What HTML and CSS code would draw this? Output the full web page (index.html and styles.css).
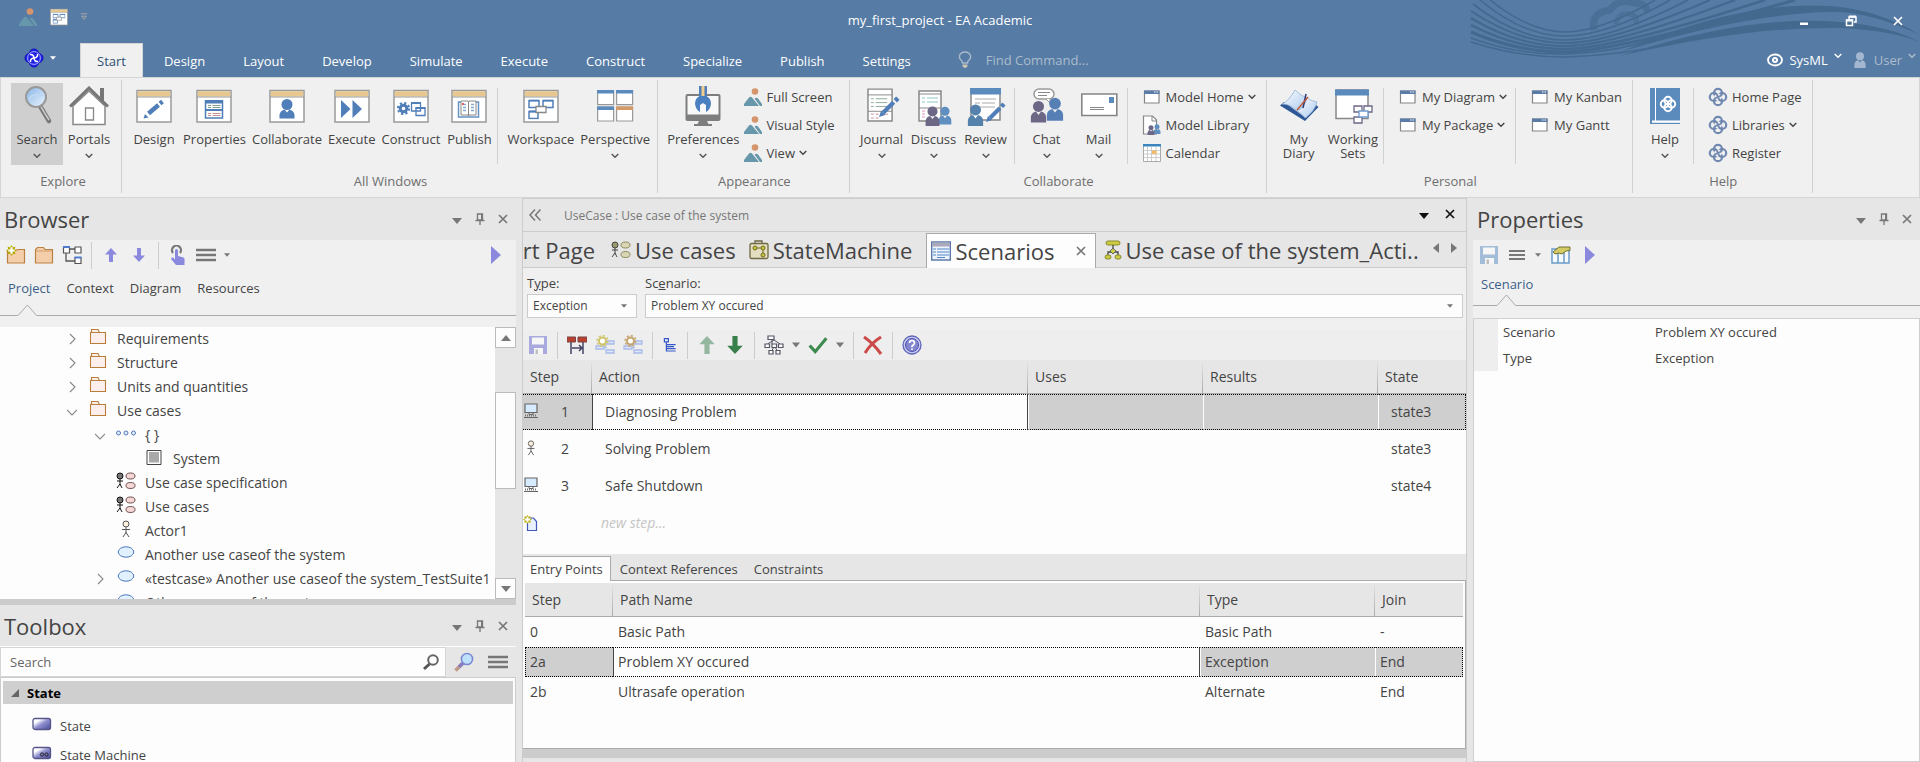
FILE: index.html
```html
<!DOCTYPE html>
<html lang="en">
<head>
<meta charset="utf-8">
<title>my_first_project - EA Academic</title>
<link rel="stylesheet" href="styles.css">
</head>
<body>
<svg class="defs" aria-hidden="true">
  <defs>
    <linearGradient id="glass" x1="0" y1="0" x2="1" y2="1"><stop offset="0" stop-color="#86b4e6"/><stop offset="1" stop-color="#eef6ff"/></linearGradient>
    <linearGradient id="stateFill" x1="0" y1="0" x2="1" y2="1"><stop offset="0.25" stop-color="#fff"/><stop offset="0.5" stop-color="#8f8fd0"/><stop offset="1" stop-color="#4a4a98"/></linearGradient>
    <linearGradient id="diaryFill" x1="0" y1="0" x2="1" y2="1"><stop offset="0" stop-color="#fff"/><stop offset="1" stop-color="#a9c9ee"/></linearGradient>
  </defs>
  <symbol id="picture" viewBox="0 0 20 20"><circle cx="12" cy="4.500" r="3.300" fill="#d6946c"/><path d="M1 19v-2l5-6.500q1.500-1.500 3 0L16 19zM11.500 11.500q2-1.500 3.500 0l4 5.500v2h-2z" fill="#6797aa"/></symbol>
  <symbol id="knot" viewBox="0 0 20 20"><g fill="none" stroke="currentColor" stroke-width="2.200"><circle cx="10" cy="5.800" r="4"/><circle cx="14.200" cy="10" r="4"/><circle cx="10" cy="14.200" r="4"/><circle cx="5.800" cy="10" r="4"/></g><circle cx="10" cy="10" r="3.600" fill="#f0f0f0"/><path d="M10 10Q9 6 6 6.500M10 10q4-1 3.500-4M10 10q1 4 4 3.500M10 10q-4 1-3.500 4" fill="none" stroke="currentColor" stroke-width="1.800"/></symbol>
  <symbol id="knot-blue" viewBox="0 0 20 20"><g fill="#2020e6" stroke="#1010b8"><circle cx="10" cy="5.500" r="4.500"/><circle cx="14.500" cy="10" r="4.500"/><circle cx="10" cy="14.500" r="4.500"/><circle cx="5.500" cy="10" r="4.500"/></g><circle cx="10" cy="10" r="7" fill="#2020e6"/><circle cx="10" cy="10" r="6.400" fill="none" stroke="#b9bcff" stroke-width=".9"/><g fill="none" stroke="#fff" stroke-width="1.500"><path d="M10 10Q9.500 6 6 6.500M10 10q4-.5 3.500-4M10 10q.5 4 4 3.500M10 10q-4 .5-3.500 4"/></g></symbol>
  <symbol id="chev" viewBox="0 0 8 6"><path d="M.7 1 4 4.300 7.300 1" fill="none" stroke="currentColor" stroke-width="1.400"/></symbol>
  <symbol id="tri" viewBox="0 0 10 6"><path d="M0 0h10L5 6z" fill="currentColor"/></symbol>
  <symbol id="quick-more" viewBox="0 0 8 10"><path d="M0 1h8" stroke="currentColor" stroke-width="1.200"/><path d="M1 4h6L4 8z" fill="none" stroke="currentColor" stroke-width="1.200"/></symbol>
  <symbol id="glass-big" viewBox="0 0 40 40"><path d="M23 20l9 15" stroke="#777" stroke-width="4.500" stroke-linecap="round"/><path d="M24 21l8 13" stroke="#ccc" stroke-width="1.500"/><circle cx="19" cy="11" r="10" fill="url(#glass)" stroke="#999" stroke-width="2"/><path d="M12 13q4-6 14-4" stroke="#bcd8f5" stroke-width="2" fill="none"/></symbol>
  <symbol id="house" viewBox="0 0 40 40"><path d="M31 2h4v14h-4z" fill="#777"/><path d="M4 20 20 5l16 15v18.500H4z" fill="#fff" stroke="#888" stroke-width="1.500"/><path d="M1 20.500 20 2l19 18.500" fill="none" stroke="#777" stroke-width="3"/><path d="M16.500 22h8v12h-8z" fill="#fff" stroke="#888" stroke-width="1.300"/></symbol>
  <symbol id="frame" viewBox="0 0 40 40"><path d="M3 4.500h34v31.500H3z" fill="#fff" stroke="#9a9a9a" stroke-width="1.500"/><path d="M3.800 5.200h32.400v5.300H3.800z" fill="#e6c78f"/><path d="M3 11h34" stroke="#9a9a9a"/></symbol>
  <symbol id="b-design" viewBox="0 0 40 40"><use href="#frame"/><path d="M14.500 27.500 24.500 19" stroke="#4f7eb8" stroke-width="4.500"/><path d="M9.500 32.500l1.500-4.500 3.500 3.500z" fill="#4f7eb8"/><path d="M26 17.500l2.500-2" stroke="#4f7eb8" stroke-width="4.500"/></symbol>
  <symbol id="b-props" viewBox="0 0 40 40"><use href="#frame"/><path d="M11.500 15h17v17h-17z" fill="#fff" stroke="#4f7eb8" stroke-width="1.500"/><path d="M11 14h18v3.500H11zM11 23h18v2H11z" fill="#4f7eb8"/><path d="M14 19.500h3m1.500 0h8M14 21.500h3m1.500 0h8" stroke="#7f9f88"/><path d="M14 27.500h3m1.500 0h8M14 29.500h3m1.500 0h8" stroke="#c09090"/></symbol>
  <symbol id="b-collab" viewBox="0 0 40 40"><use href="#frame"/><circle cx="20" cy="18.500" r="5.500" fill="#4f7eb8"/><path d="M12.500 32.500v-4q1-4 5-5l2.500 3 2.500-3q4 1 5 5v4z" fill="#4f7eb8"/></symbol>
  <symbol id="b-exec" viewBox="0 0 40 40"><use href="#frame"/><path d="M9 14l9.500 9-9.500 9zM20.500 14l9.500 9-9.500 9z" fill="#4f7eb8"/></symbol>
  <symbol id="b-build" viewBox="0 0 40 40"><use href="#frame"/><circle cx="12.500" cy="22.500" r="3.300" fill="#fff" stroke="#4f7eb8" stroke-width="3"/><circle cx="12.500" cy="22.500" r="5.600" fill="none" stroke="#4f7eb8" stroke-width="2" stroke-dasharray="2.200 2.200"/><path d="M20.500 17h9v8h-9zM25 22h9v7.500h-9z" fill="#fff" stroke="#4f7eb8" stroke-width="1.300"/><path d="M20 17h10M24.500 22h10" stroke="#4f7eb8" stroke-width="2"/></symbol>
  <symbol id="b-book" viewBox="0 0 40 40"><use href="#frame"/><path d="M9.500 16h20v15h-20z" fill="#fff" stroke="#6593c2" stroke-width="1.500"/><path d="M12 15h7l.5 1 .5-1h7v14h-7l-.5 1-.5-1h-7z" fill="#fff" stroke="#888"/><path d="M19.500 16v14" stroke="#888"/><path d="M14 18.500h3M14 21.500h3M22 18.500h3M22 21.500h3M22 24.500h3M14 24.500h3" stroke="#86a9cf" stroke-width="1.500"/><path d="M13 17h2v2h-2z" fill="#e06060"/></symbol>
  <symbol id="flow" viewBox="0 0 26 20"><path d="M1 1h10v7H1zM15 1h10v7H15zM1 12h9v7H1z" fill="#fff" stroke="#4f7eb8" stroke-width="1.500"/><path d="M8 7h10v6H8z" fill="#fff" stroke="#888" stroke-width="1.300"/><path d="M1 1h10M15 1h10M1 12h7" stroke="#4f7eb8" stroke-width="2"/></symbol>
  <symbol id="b-work" viewBox="0 0 40 40"><use href="#frame"/><use href="#flow" x="7" y="13.500" width="26" height="20"/></symbol>
  <symbol id="b-persp" viewBox="0 0 40 40"><g fill="#fff" stroke="#999" stroke-width="1.200"><path d="M2.600 4.600h16v14h-16zM21.600 4.600h16v14h-16zM2.600 21h16v14h-16zM21.600 21h16v14h-16z"/></g><path d="M2 4h17v3.500H2zM21 4h17v3.500H21zM2 20.500h17V24H2z" fill="#5b8bbd"/><path d="M21 20.500h17V24H21z" fill="#d59b64"/></symbol>
  <symbol id="b-prefs" viewBox="0 0 40 40"><rect x="2.500" y="8" width="35" height="27" rx="2" fill="#7e7e7e"/><path d="M4.500 10h31v18.500h-31z" fill="#f8f8f8"/><path d="M16 35h8l1.500 3H29v2H11v-2h3.500z" fill="#7e7e7e"/><path d="M16 0h8v12h-8z" fill="#4f7eb8"/><path d="M18.500 0h3v11h-3z" fill="#f0cd8c"/><path d="M17 10h6q5 2 5 8-1 6-5 8v-7l-3-2-3 2v7q-4-2-5-8 0-6 5-8z" fill="#4a7fc0"/></symbol>
  <symbol id="pen" viewBox="0 0 20 20"><path d="M4 16 14 6" stroke="#4f7eb8" stroke-width="4"/><path d="M0 20l2-6 4 4z" fill="#4f7eb8"/><path d="M15.500 4.500l2.500-2.500" stroke="#4f7eb8" stroke-width="4.500"/></symbol>
  <symbol id="page" viewBox="0 0 28 36"><path d="M1 1h25v33H1z" fill="#fff" stroke="#888" stroke-width="1.500"/><path d="M1 7h25M1 24h25" stroke="#888"/><path d="M4 11h3m2 0h12M4 15h3m2 0h12M4 19h3m2 0h12" stroke="#8aac98"/><path d="M4 27h3m2 0h3m2 0h8M4 31h3m2 0h3" stroke="#c09090"/></symbol>
  <symbol id="person" viewBox="0 0 20 26"><circle cx="10" cy="7" r="6.500"/><path d="M1 26v-7q1-5 6-6l3 4 3-4q5 1 6 6v7z"/></symbol>
  <symbol id="b-journal" viewBox="0 0 40 40"><use href="#page" x="5" y="2" width="27" height="35"/><use href="#pen" x="17" y="10" width="21" height="21"/></symbol>
  <symbol id="b-discuss" viewBox="0 0 40 40"><path d="M5 5h22v30H5z" fill="#fff" stroke="#888" stroke-width="1.500"/><path d="M5 8h22M5 22h22" stroke="#888"/><path d="M8 12h3m2 0h11M8 16h3m2 0h11" stroke="#8cc8c8"/><path d="M8 25h3M8 28h3M8 31h3" stroke="#e090c0"/><use href="#person" x="24" y="20" width="14" height="19" fill="#5f8fc0"/><use href="#person" x="10" y="20" width="17" height="20" fill="#6b6785"/></symbol>
  <symbol id="b-review" viewBox="0 0 40 40"><path d="M5 3h29v31H5z" fill="#fff" stroke="#888" stroke-width="1.500"/><path d="M4 2h31v6.500H4z" fill="#5b8bbd"/><path d="M9 13h21M9 17h5m2 0h13M13 21h16" stroke="#aaa"/><use href="#person" x="0" y="18" width="19" height="22" fill="#5582ad"/><use href="#pen" x="20" y="16" width="20" height="20"/></symbol>
  <symbol id="b-chat" viewBox="0 0 40 40"><rect x="7" y="3" width="20" height="10" rx="5" fill="#fff" stroke="#999" stroke-width="1.500"/><path d="M11 6.500h12M11 9.500h9" stroke="#888"/><path d="M19 13l4 4v-4" fill="#fff" stroke="#999"/><use href="#person" x="3" y="14" width="17" height="23" fill="#6b6785"/><use href="#person" x="19" y="11" width="18" height="24" fill="#567fb6"/></symbol>
  <symbol id="b-mail" viewBox="0 0 40 40"><path d="M2.800 8h35v21.500h-35z" fill="#fff" stroke="#858585" stroke-width="1.600"/><path d="M30 11h5v6h-5z" fill="#5b8bbd"/><path d="M11 21.500h14M11 23.500h14" stroke="#888"/></symbol>
  <symbol id="b-diary" viewBox="0 0 40 40"><path d="M1 19.500 5 16l22 16 10-13 2.500 2L26 35z" fill="#2d5796"/><path d="M3 18Q10 15 16 4q6 6 12 8-2 9-10 13-6-7-15-7z" fill="url(#diaryFill)" stroke="#8aa9cf" stroke-width=".7"/><path d="M18 25q8-4 10-13 4 3 10 4-2 9-12 16-3-5-8-7z" fill="url(#diaryFill)" stroke="#8aa9cf" stroke-width=".7"/><path d="M24 22l3-14" stroke="#2c3a7a" stroke-width="1.500"/><path d="M18 24l11-13" stroke="#c5552d" stroke-width="1.300"/></symbol>
  <symbol id="b-sets" viewBox="0 0 40 40"><path d="M3 4h32v28.500H3z" fill="#fff" stroke="#888" stroke-width="1.500"/><path d="M2 3.500h34V9.500H2z" fill="#5b8bbd"/><g fill="#fff" stroke="#6b6785" stroke-width="1.300"><path d="M21 20h8v6h-8zM31 20h8v6h-8zM21 31h8v6h-8z"/><path d="M26 25h9v6h-9z" stroke="#6f9bd0"/></g></symbol>
  <symbol id="b-help" viewBox="0 0 40 40"><path d="M5 2h30v36H5z" fill="#5b8bbd"/><path d="M10.500 2v33" stroke="#fff"/><path d="M7 34.500h28v2.300H7z" fill="#fff"/><g fill="none" stroke="#fff" stroke-width="2"><circle cx="23" cy="14.500" r="3.700"/><circle cx="26.500" cy="18" r="3.700"/><circle cx="23" cy="21.500" r="3.700"/><circle cx="19.500" cy="18" r="3.700"/></g></symbol>
  <symbol id="win" viewBox="0 0 20 20"><path d="M2.500 4h14.500v12h-14.500z" fill="#fff" stroke="#858585" stroke-width="1.200"/><path d="M2 3.500h15.500v3.500H2z" fill="#5a7ba5"/><path d="M12 5h1.500M14.500 5h1.500" stroke="#fff"/></symbol>
  <symbol id="lib" viewBox="0 0 20 20"><path d="M1.500 1h9l4 4v14h-13z" fill="#fff" stroke="#888" stroke-width="1.200"/><path d="M10 1v5h5" fill="none" stroke="#888"/><use href="#person" x="11" y="9" width="8" height="10" fill="#5f8fc0"/><use href="#person" x="5" y="10" width="8" height="10" fill="#6b6785"/></symbol>
  <symbol id="cal" viewBox="0 0 20 20"><path d="M1.500 1.500h17v17h-17z" fill="#fff" stroke="#aaa"/><path d="M1 1h18v2.500H1z" fill="#3c86bd"/><path d="M5.500 4v14M9.500 4v14M14 4v14M2 7.500h16M2 11h16M2 14.500h16" stroke="#ccc"/><path d="M10 7.500h4.500v3.500H10z" fill="#f2b96b"/></symbol>
  <symbol id="bulb" viewBox="0 0 14 18"><path d="M4.500 12Q4.500 10 2.500 8.500 1 6.500 1.500 4.500 3 1 7 1t5.500 3.500q.5 2-1 4-2 1.500-2 3.500z" fill="none" stroke="#a9bac9" stroke-width="1.400"/><path d="M4.500 13.500h5v2l-2 1.500h-1l-2-1.500z" fill="#c9c4b2"/></symbol>
  <symbol id="eye" viewBox="0 0 16 14"><ellipse cx="8" cy="7" rx="7" ry="5.500" fill="none" stroke="#fff" stroke-width="1.800"/><circle cx="8" cy="7" r="3" fill="#fff"/><circle cx="8" cy="7" r="1" fill="#567ba5"/></symbol>
  <symbol id="min" viewBox="0 0 10 10"><path d="M1 6.500h8v2.500H1z" fill="#fff"/></symbol>
  <symbol id="restore" viewBox="0 0 12 12"><path d="M4 4V2h7v5H9M1.500 5h6v5.500h-6z" fill="none" stroke="#fff" stroke-width="1.500"/><path d="M4 1.500h7M1 5.500h7" stroke="#fff" stroke-width="2"/></symbol>
  <symbol id="x" viewBox="0 0 10 10"><path d="M1 1l8 8M9 1 1 9" fill="none" stroke="currentColor" stroke-width="1.700"/></symbol>
  <symbol id="pin" viewBox="0 0 10 12"><path d="M2.500 1h5v6h-5zM.5 7.500h9M5 8v4" fill="none" stroke="currentColor" stroke-width="1.300"/><path d="M7 1v6" stroke="currentColor" stroke-width="2"/></symbol>
  <symbol id="folder" viewBox="0 0 20 20"><path d="M1.500 18V4.500l2-2h6l1.500 2h7.500V18z" fill="#f4ceaa" stroke="#b98142" stroke-width="1.200"/><path d="M2 6h16" stroke="#d09c66"/></symbol>
  <symbol id="star" viewBox="0 0 10 10"><path d="M5 0l1.200 2L8.500 1.500 8 3.800 10 5 8 6.200l.5 2.300L6.200 8 5 10 3.800 8l-2.300.5L2 6.200 0 5l2-1.200L1.500 1.500 3.800 2z" fill="#b5a800"/><path d="M5 2v6M2 5h6" stroke="#fff" stroke-width="2"/></symbol>
  <symbol id="folder-new" viewBox="0 0 20 20"><path d="M1.500 18V6h4l7-1.500h6V18z" fill="#f4ceaa" stroke="#b98142" stroke-width="1.200"/><use href="#star" x="0" y="0" width="11" height="11"/></symbol>
  <symbol id="hier" viewBox="0 0 20 20"><path d="M4 7v9h9M7 4h7" stroke="#555" fill="none" stroke-width="1.300"/><g fill="#fff" stroke="#555" stroke-width="1.200"><path d="M1.500 2h6v6h-6zM13 2h6v6h-6zM13 12.500h6v6h-6z"/></g><path d="M1 1h7v2H1zM12.500 11.500h7v2h-7z" fill="#4f7ed0"/></symbol>
  <symbol id="up" viewBox="0 0 12 14"><path d="M6 0l6 6.500H8V14H4V6.500H0z" fill="currentColor"/></symbol>
  <symbol id="down" viewBox="0 0 12 14"><path d="M6 14l6-6.500H8V0H4v7.500H0z" fill="currentColor"/></symbol>
  <symbol id="hand" viewBox="0 0 16 20"><path d="M3 8a4.500 4.500 0 1 1 7 0" fill="none" stroke="#777" stroke-width="2.200"/><path d="M5 5q1.500-2 3 0v6l5.500 1.500q1.500 1 1 4.500v3H6l-5-6q0-2 2-1.500l2 2z" fill="#8a89dd"/></symbol>
  <symbol id="menu" viewBox="0 0 20 14"><path d="M0 2h20M0 7h20M0 12h20" stroke="#777" stroke-width="2.300"/></symbol>
  <symbol id="play" viewBox="0 0 10 18"><path d="M0 0l10 9-10 9z" fill="#8a89dd"/></symbol>
  <symbol id="t-fold" viewBox="0 0 18 18"><path d="M1.500 15.500V4.500h15v11zM2.500 4.500v-3h6.500l1.500 3" fill="#fdf0ec" stroke="#bb7d3b" stroke-width="1.100"/></symbol>
  <symbol id="t-right" viewBox="0 0 10 12"><path d="M3 1l5 5-5 5" fill="none" stroke="#888" stroke-width="1.100"/></symbol>
  <symbol id="t-down" viewBox="0 0 10 12"><path d="M0 5l5 5 5-5" fill="none" stroke="#888" stroke-width="1.100"/></symbol>
  <symbol id="t-dots" viewBox="0 0 20 18"><g fill="#dceeff" stroke="#5579b8"><circle cx="2.500" cy="9" r="2"/><circle cx="10" cy="9" r="2"/><circle cx="17.500" cy="9" r="2"/></g></symbol>
  <symbol id="t-block" viewBox="0 0 16 18"><path d="M1 2.500h14v14H1z" fill="#fff" stroke="#444"/><path d="M3 4h10v10.500H3z" fill="#a9a9a9"/></symbol>
  <symbol id="t-uc" viewBox="0 0 20 18"><circle cx="4" cy="4" r="3" fill="#777" stroke="#111"/><path d="M4 7v6M1 9h6M4 12l-3 4M4 12l2 4" stroke="#111" fill="none"/><g fill="#f6d7d7" stroke="#6b4a4a"><ellipse cx="14.500" cy="4" rx="4.500" ry="3"/><ellipse cx="14.500" cy="13.500" rx="4.500" ry="3"/></g></symbol>
  <symbol id="t-uc2" viewBox="0 0 20 18"><circle cx="4" cy="4" r="3" fill="#9a9a6a" stroke="#444"/><path d="M4 7v6M1 9h6M4 12l-3 4M4 12l2 4" stroke="#444" fill="none"/><g fill="#d9d5b5" stroke="#8a8a5a"><ellipse cx="14.500" cy="4" rx="4.500" ry="3"/><ellipse cx="14.500" cy="13.500" rx="4.500" ry="3"/></g></symbol>
  <symbol id="t-actor" viewBox="0 0 12 18"><circle cx="6" cy="4" r="3" fill="#fdf0dc" stroke="#555"/><path d="M6 7v6M2 9.500h8M6 12.500L3 17M6 12.500L9 17" stroke="#555" fill="none"/></symbol>
  <symbol id="t-oval" viewBox="0 0 18 18"><ellipse cx="9" cy="8" rx="7.800" ry="5.200" fill="#e2f1ff" stroke="#4c78c0"/></symbol>
  <symbol id="glass-sm" viewBox="0 0 18 18"><circle cx="11" cy="7" r="4.800" fill="none" stroke="#666" stroke-width="2"/><path d="M7.500 11 2 16" stroke="#555" stroke-width="3"/></symbol>
  <symbol id="glass-col" viewBox="0 0 20 20"><path d="M8.500 11.500 1.500 18.500" stroke="#c09a88" stroke-width="3.500"/><path d="M9 11 5 15" stroke="#8a7cc0" stroke-width="3.500"/><circle cx="13" cy="7" r="5.600" fill="#bfe0fa" stroke="#7b86d2" stroke-width="1.500"/></symbol>
  <symbol id="state" viewBox="0 0 20 14"><rect x="1" y="1.500" width="17.500" height="11" rx="2" fill="url(#stateFill)" stroke="#55558a" stroke-width="1.300"/></symbol>
  <symbol id="statem" viewBox="0 0 20 14"><use href="#state"/><circle cx="10" cy="8.500" r="1.600" fill="none" stroke="#222"/><circle cx="14.500" cy="8.500" r="1.600" fill="none" stroke="#222"/></symbol>
  <symbol id="dbl" viewBox="0 0 12 12"><path d="M6 0.500 1 6l5 5.500M11.500.5l-5 5.500 5 5.500" fill="none" stroke="#777" stroke-width="1.500"/></symbol>
  <symbol id="d-sm" viewBox="0 0 20 20"><rect x="1" y="3.500" width="18" height="15" rx="1.500" fill="#e3dec0" stroke="#6f6a44" stroke-width="1.300"/><path d="M6 3V1h7v2" fill="none" stroke="#6f6a44" stroke-width="1.300"/><g fill="#c8c83c" stroke="#6f6a20"><circle cx="6" cy="8" r="2"/><circle cx="14" cy="8" r="2"/><circle cx="14" cy="15" r="2"/></g><path d="M8 8h4M14 10v3" stroke="#6f6a20"/></symbol>
  <symbol id="d-sc" viewBox="0 0 20 20"><path d="M.7 1h18.600v18H.7z" fill="#eef4ff" stroke="#5c7aa9" stroke-width="1.400"/><path d="M1 1.500h18v4H1z" fill="#a9a9bb"/><path d="M2 8h3m1 0h12M2 11h3m1 0h12M2 14h3m1 0h12M6 16.500h8" stroke="#4f86c4" stroke-width="1.200"/></symbol>
  <symbol id="d-act" viewBox="0 0 18 20"><rect x="2" y="1" width="14" height="4" rx="2" fill="#cccc40" stroke="#8a8a30"/><path d="M9 5v9M4 16v-4h10v4" stroke="#444" fill="none" stroke-width="1.300"/><path d="M9 8l3 3-3 3-3-3z" fill="#cccc40" stroke="#666"/><rect x="1" y="15" width="6" height="4" rx="2" fill="#cccc40" stroke="#8a8a30"/><rect x="11" y="15" width="6" height="4" rx="2" fill="#cccc40" stroke="#8a8a30"/></symbol>
  <symbol id="save" viewBox="0 0 20 20"><path d="M1 1h18v18H1z" fill="currentColor"/><path d="M4 2.500h12v7H4zM6 13h9v6H6z" fill="#f6f6f6"/><path d="M7.500 14.500h2.500V19H7.500z" fill="#999" opacity=".6"/></symbol>
  <symbol id="c-red" viewBox="0 0 20 20"><path d="M4 6v13M16 6v13M5 13h10M12 10l3 3-3 3" fill="none" stroke="#444466" stroke-width="1.500"/><path d="M0 2h8.500v5H0zM11 2h9v5h-9z" fill="#b9402f" stroke="#744"/></symbol>
  <symbol id="c-y" viewBox="0 0 20 20"><path d="M1 11h8v3H1zM11 6h8v3h-8zM11 15h8v3h-8zM9 12.500h3" fill="#dfe6fb" stroke="#a9bbe8" stroke-width="1.300"/><circle cx="7.500" cy="6" r="3.500" fill="#fff" stroke="#cfc468" stroke-width="2"/><circle cx="7.500" cy="6" r="5.400" fill="none" stroke="#cfc468" stroke-width="1.400" stroke-dasharray="2 2.200"/></symbol>
  <symbol id="c-o" viewBox="0 0 20 20"><path d="M1 11h8v3H1zM11 6h8v3h-8zM11 15h8v3h-8zM9 12.500h3" fill="#dfe6fb" stroke="#a9bbe8" stroke-width="1.300"/><circle cx="7.500" cy="6" r="3.500" fill="#fff" stroke="#c5a36a" stroke-width="2"/><circle cx="7.500" cy="6" r="5.400" fill="none" stroke="#c5a36a" stroke-width="1.400" stroke-dasharray="2 2.200"/></symbol>
  <symbol id="c-list" viewBox="0 0 18 20"><path d="M2 2h5v4H2zM4.500 6v12M5 9.500h11M5 12h9M5 14.500h11M5 17.500h11" fill="none" stroke="#3558c8" stroke-width="1.500"/></symbol>
  <symbol id="c-struct" viewBox="0 0 20 20"><path d="M8 4v5M3.500 9 10 5l6 4M10 12l-3 5M11 12l3 5" stroke="#556" fill="none"/><g fill="#fff" stroke="#556" stroke-width="1.200"><path d="M4 1h6v3.500H4zM1 9h4.500v3.500H1zM8 9h4.500v3.500H8zM14.500 9H19v3.500h-4.500zM5 15.500h4V19H5zM12 15.500h4V19h-4z"/></g></symbol>
  <symbol id="c-check" viewBox="0 0 18 16"><path d="M1.500 8.500 6.500 14 16.500 2" fill="none" stroke="#3c8a4e" stroke-width="2.800"/></symbol>
  <symbol id="c-x" viewBox="0 0 20 20"><path d="M1 2q9 6 17 17M18 2Q8 8 2 18" fill="none" stroke="#cc4a4a" stroke-width="3"/></symbol>
  <symbol id="c-help" viewBox="0 0 20 20"><circle cx="10" cy="10" r="9" fill="#c9cbf2" stroke="#5f64b8" stroke-width="1.300"/><circle cx="10" cy="10" r="6.500" fill="#8487cf" stroke="#4d52ad"/><path d="M7.500 8q0-2.500 2.500-2.500T12.500 8q0 1.500-2.500 3v1.300M10 13.500V15" fill="none" stroke="#fff" stroke-width="1.600"/></symbol>
  <symbol id="pc" viewBox="0 0 16 16"><path d="M2 1h12v8.500H2z" fill="#d7ebff" stroke="#666" stroke-width="1.200"/><path d="M6 9.500v2h4v-2M1 14.500h14" fill="none" stroke="#666"/><path d="M2 12.500h12" stroke="#777" stroke-dasharray="1 1" stroke-width="2"/></symbol>
  <symbol id="newdoc" viewBox="0 0 16 16"><path d="M4.500 3h6l3 3.500v9h-9z" fill="#e8f1ff" stroke="#4058b8" stroke-width="1.200"/><use href="#star" x="0" y="0" width="9" height="9"/></symbol>
  <symbol id="p-table" viewBox="0 0 20 20"><path d="M1 4h17v14H1zM7 4v14M13 4v14" fill="#f5faff" stroke="#6b9ac8" stroke-width="1.500"/><path d="M2 7 8 2h11v3.500l-4 .5-4 3-3-1-4 1z" fill="#d4cc62" stroke="#66652a" stroke-width=".9"/></symbol>
</svg>

<div class="app">
  <header class="top">
    <svg class="waves" viewBox="0 0 450 77" aria-hidden="true">
      <g fill="none" stroke="#44698f">
        <path d="M124 30Q120 13 140 10 148-2 164 3q12 0 14 9" stroke-width="7" opacity=".6"/>
        <path d="M146 24q2-12 14-10 8 2 6 10" stroke-width="5" opacity=".5"/>
        <path d="M20 0q40 32 75 32t90-32" stroke-width="1.500"/>
        <path d="M10 0q43 36 85 36T200 0" stroke-width="1.500"/>
        <path d="M3 4q46 36 92 36T218 0" stroke-width="1.700"/>
        <path d="M1 11q48 32 94 32T240 0" stroke-width="2"/>
        <path d="M1 18q46 28 94 28T265 0" stroke-width="2.200"/>
        <path d="M1 25q46 24 94 24T295 0" stroke-width="2.500"/>
        <path d="M1 32q46 20 94 20T325 0" stroke-width="3"/>
        <path d="M1 38q46 17 94 16 60-2 100-20" stroke-width="1.500"/>
        <path d="M1 42q46 15 94 15 60-2 110-14" stroke-width="1.500"/>
      </g>
      <path d="M150 52Q270 0 360 6q50 4 90 29-50-24-90-23Q280 13 150 52zM150 56Q280 14 370 22q50 4 80 20-30-12-80-14-90-2-220 28z" fill="#44698f"/>
    </svg>
    <div class="titlebar">
      <div class="quick">
        <svg class="s20"><use href="#picture"/></svg>
        <svg class="s20"><use href="#b-work"/></svg>
        <svg class="s8 more"><use href="#quick-more"/></svg>
      </div>
      <h1 class="apptitle">my_first_project - EA Academic</h1>
      <div class="winctl">
        <button aria-label="Minimize"><svg class="s10"><use href="#min"/></svg></button>
        <button aria-label="Restore"><svg class="s12"><use href="#restore"/></svg></button>
        <button aria-label="Close"><svg class="s10"><use href="#x"/></svg></button>
      </div>
    </div>
    <div class="menubar">
      <button class="appbtn" aria-label="Application menu"><svg class="s20"><use href="#knot-blue"/></svg><svg class="s6"><use href="#tri"/></svg></button>
      <nav class="rtabs">
        <button class="on">Start</button><button>Design</button><button>Layout</button><button>Develop</button><button>Simulate</button><button>Execute</button><button>Construct</button><button>Specialize</button><button>Publish</button><button>Settings</button>
      </nav>
      <label class="find"><svg class="bulb"><use href="#bulb"/></svg><input placeholder="Find Command..." aria-label="Find Command"></label>
      <div class="usr">
        <button><svg class="s16"><use href="#eye"/></svg>SysML<svg class="s8 hi"><use href="#chev"/></svg></button>
        <button class="dim"><svg class="s16" fill="#a3b8d0"><use href="#person"/></svg>User<svg class="s8 hi"><use href="#chev"/></svg></button>
      </div>
    </div>
  </header>

  <section class="ribbon" aria-label="Ribbon">
    <div class="group"><div class="gbody">
      <button class="big on"><svg><use href="#glass-big"/></svg><span>Search</span><svg class="cv"><use href="#chev"/></svg></button>
      <button class="big"><svg><use href="#house"/></svg><span>Portals</span><svg class="cv"><use href="#chev"/></svg></button>
    </div><h2>Explore</h2></div>
    <div class="group"><div class="gbody">
      <button class="big"><svg><use href="#b-design"/></svg><span>Design</span></button>
      <button class="big"><svg><use href="#b-props"/></svg><span>Properties</span></button>
      <button class="big"><svg><use href="#b-collab"/></svg><span>Collaborate</span></button>
      <button class="big"><svg><use href="#b-exec"/></svg><span>Execute</span></button>
      <button class="big"><svg><use href="#b-build"/></svg><span>Construct</span></button>
      <button class="big"><svg><use href="#b-book"/></svg><span>Publish</span></button>
      <i class="sep"></i>
      <button class="big"><svg><use href="#b-work"/></svg><span>Workspace</span></button>
      <button class="big"><svg><use href="#b-persp"/></svg><span>Perspective</span><svg class="cv"><use href="#chev"/></svg></button>
    </div><h2>All Windows</h2></div>
    <div class="group"><div class="gbody">
      <button class="big"><svg><use href="#b-prefs"/></svg><span>Preferences</span><svg class="cv"><use href="#chev"/></svg></button>
      <div class="col">
        <button><svg class="s20"><use href="#picture"/></svg>Full Screen</button>
        <button><svg class="s20"><use href="#picture"/></svg>Visual Style</button>
        <button><svg class="s20"><use href="#picture"/></svg>View<svg class="s8"><use href="#chev"/></svg></button>
      </div>
    </div><h2>Appearance</h2></div>
    <div class="group"><div class="gbody">
      <button class="big"><svg><use href="#b-journal"/></svg><span>Journal</span><svg class="cv"><use href="#chev"/></svg></button>
      <button class="big"><svg><use href="#b-discuss"/></svg><span>Discuss</span><svg class="cv"><use href="#chev"/></svg></button>
      <button class="big"><svg><use href="#b-review"/></svg><span>Review</span><svg class="cv"><use href="#chev"/></svg></button>
      <i class="sep"></i>
      <button class="big"><svg><use href="#b-chat"/></svg><span>Chat</span><svg class="cv"><use href="#chev"/></svg></button>
      <button class="big"><svg><use href="#b-mail"/></svg><span>Mail</span><svg class="cv"><use href="#chev"/></svg></button>
      <i class="sep"></i>
      <div class="col wide">
        <button><svg class="s20"><use href="#win"/></svg>Model Home<svg class="s8"><use href="#chev"/></svg></button>
        <button><svg class="s20"><use href="#lib"/></svg>Model Library</button>
        <button><svg class="s20"><use href="#cal"/></svg>Calendar</button>
      </div>
    </div><h2>Collaborate</h2></div>
    <div class="group"><div class="gbody">
      <button class="big"><svg><use href="#b-diary"/></svg><span>My<br>Diary</span></button>
      <button class="big"><svg><use href="#b-sets"/></svg><span>Working<br>Sets</span></button>
      <i class="sep"></i>
      <div class="col wide">
        <button><svg class="s20"><use href="#win"/></svg>My Diagram<svg class="s8"><use href="#chev"/></svg></button>
        <button><svg class="s20"><use href="#win"/></svg>My Package<svg class="s8"><use href="#chev"/></svg></button>
      </div>
      <i class="sep"></i>
      <div class="col wide">
        <button><svg class="s20"><use href="#win"/></svg>My Kanban</button>
        <button><svg class="s20"><use href="#win"/></svg>My Gantt</button>
      </div>
    </div><h2>Personal</h2></div>
    <div class="group"><div class="gbody">
      <button class="big"><svg><use href="#b-help"/></svg><span>Help</span><svg class="cv"><use href="#chev"/></svg></button>
      <i class="sep"></i>
      <div class="col wide knots">
        <button><svg class="s20"><use href="#knot"/></svg>Home Page</button>
        <button><svg class="s20"><use href="#knot"/></svg>Libraries<svg class="s8"><use href="#chev"/></svg></button>
        <button><svg class="s20"><use href="#knot"/></svg>Register</button>
      </div>
    </div><h2>Help</h2></div>
  </section>

  <main class="work">
    <aside class="left">
      <section class="browser">
        <div class="phead"><h2>Browser</h2><div class="pctl"><button aria-label="Options"><svg class="s10"><use href="#tri"/></svg></button><button aria-label="Pin"><svg class="s12"><use href="#pin"/></svg></button><button aria-label="Close"><svg class="s10"><use href="#x"/></svg></button></div></div>
        <div class="ptools">
          <button aria-label="New model"><svg class="s20"><use href="#folder-new"/></svg></button>
          <button aria-label="New package"><svg class="s20"><use href="#folder"/></svg></button>
          <button aria-label="New diagram"><svg class="s20"><use href="#hier"/></svg></button>
          <i class="tsep"></i>
          <button class="violet" aria-label="Move up"><svg class="s20 arr"><use href="#up"/></svg></button>
          <button class="violet" aria-label="Move down"><svg class="s20 arr"><use href="#down"/></svg></button>
          <i class="tsep"></i>
          <button aria-label="Locate"><svg class="s20"><use href="#hand"/></svg></button>
          <button aria-label="Menu"><svg class="s20"><use href="#menu"/></svg></button>
          <svg class="s6 grey"><use href="#tri"/></svg>
          <button class="end" aria-label="Next"><svg class="s18"><use href="#play"/></svg></button>
        </div>
        <div class="ptabs"><button class="on">Project</button><button>Context</button><button>Diagram</button><button>Resources</button></div>
        <svg class="notch" viewBox="0 0 40 12" preserveAspectRatio="xMinYMin meet"><path d="M0 11.500h18L27.500 1 36.500 11.500H40" fill="none" stroke="#aaa"/></svg>
        <div class="treebox">
          <ul class="tree">
            <li class="l1"><svg class="tw"><use href="#t-right"/></svg><svg class="ti"><use href="#t-fold"/></svg>Requirements</li>
            <li class="l1"><svg class="tw"><use href="#t-right"/></svg><svg class="ti"><use href="#t-fold"/></svg>Structure</li>
            <li class="l1"><svg class="tw"><use href="#t-right"/></svg><svg class="ti"><use href="#t-fold"/></svg>Units and quantities</li>
            <li class="l1"><svg class="tw"><use href="#t-down"/></svg><svg class="ti"><use href="#t-fold"/></svg>Use cases</li>
            <li class="l2"><svg class="tw"><use href="#t-down"/></svg><svg class="ti"><use href="#t-dots"/></svg>{ }</li>
            <li class="l3"><svg class="tw"></svg><svg class="ti"><use href="#t-block"/></svg>System</li>
            <li class="l2"><svg class="tw"></svg><svg class="ti"><use href="#t-uc"/></svg>Use case specification</li>
            <li class="l2"><svg class="tw"></svg><svg class="ti"><use href="#t-uc"/></svg>Use cases</li>
            <li class="l2"><svg class="tw"></svg><svg class="ti"><use href="#t-actor"/></svg>Actor1</li>
            <li class="l2"><svg class="tw"></svg><svg class="ti"><use href="#t-oval"/></svg>Another use caseof the system</li>
            <li class="l2"><svg class="tw"><use href="#t-right"/></svg><svg class="ti"><use href="#t-oval"/></svg>«testcase» Another use caseof the system_TestSuite1</li>
            <li class="l2"><svg class="tw"></svg><svg class="ti"><use href="#t-oval"/></svg>Other use caseof the system</li>
          </ul>
          <div class="sbar"><button aria-label="Scroll up"><svg class="s10 flip"><use href="#tri"/></svg></button><i class="track"></i><i class="thumb"></i><i class="track2"></i><button aria-label="Scroll down"><svg class="s10"><use href="#tri"/></svg></button></div>
        </div>
      </section>
      <section class="toolbox">
        <div class="phead"><h2>Toolbox</h2><div class="pctl"><button aria-label="Options"><svg class="s10"><use href="#tri"/></svg></button><button aria-label="Pin"><svg class="s12"><use href="#pin"/></svg></button><button aria-label="Close"><svg class="s10"><use href="#x"/></svg></button></div></div>
        <div class="tsearch">
          <label><input placeholder="Search" aria-label="Search toolbox"><svg class="s18"><use href="#glass-sm"/></svg></label>
          <button aria-label="Find"><svg class="s20"><use href="#glass-col"/></svg></button>
          <button aria-label="Menu"><svg class="s20"><use href="#menu"/></svg></button>
        </div>
        <div class="tlist">
          <h3><svg class="s8" viewBox="0 0 8 8"><path d="M8 0v8H0z" fill="#666"/></svg>State</h3>
          <button><svg class="st"><use href="#state"/></svg>State</button>
          <button><svg class="st"><use href="#statem"/></svg>State Machine</button>
        </div>
      </section>
    </aside>

    <section class="center">
      <div class="crumb"><svg class="s12"><use href="#dbl"/></svg><span>UseCase : Use case of the system</span><div class="cctl"><svg class="s10"><use href="#tri"/></svg><svg class="s10"><use href="#x"/></svg></div></div>
      <div class="dtabs">
        <button class="cut"><span>Start Page</span></button>
        <button class="t1"><svg class="s20"><use href="#t-uc2"/></svg>Use cases</button>
        <button class="t1"><svg class="s20"><use href="#d-sm"/></svg>StateMachine</button>
        <button class="on"><svg class="s20"><use href="#d-sc"/></svg>Scenarios<svg class="s10 cl"><use href="#x"/></svg></button>
        <button class="last"><svg class="s20"><use href="#d-act"/></svg><span>Use case of the system_Acti..</span></button>
        <div class="nav"><svg class="s10" viewBox="0 0 10 10"><path d="M8 0v10L2 5z" fill="#777"/></svg><svg class="s10" viewBox="0 0 10 10"><path d="M2 0v10l6-5z" fill="#777"/></svg></div>
      </div>
      <div class="form">
        <label class="ty"><span>T<u>y</u>pe:</span><span class="selw"><select><option>Exception</option></select><svg class="s6 grey"><use href="#tri"/></svg></span></label>
        <label class="sc"><span>Sc<u>e</u>nario:</span><span class="selw"><select><option>Problem XY occured</option></select><svg class="s6 grey"><use href="#tri"/></svg></span></label>
      </div>
      <div class="ctools">
        <button class="pale" aria-label="Save"><svg class="s20"><use href="#save"/></svg></button><i class="tsep"></i>
        <button aria-label="Split step"><svg class="s20"><use href="#c-red"/></svg></button>
        <button aria-label="Add alternate"><svg class="s20"><use href="#c-y"/></svg></button>
        <button aria-label="Add exception"><svg class="s20"><use href="#c-o"/></svg></button><i class="tsep"></i>
        <button aria-label="Outline"><svg class="s16"><use href="#c-list"/></svg></button><i class="tsep"></i>
        <button class="lgreen" aria-label="Move step up"><svg class="s20 arr"><use href="#up"/></svg></button>
        <button class="green" aria-label="Move step down"><svg class="s20 arr"><use href="#down"/></svg></button><i class="tsep"></i>
        <button aria-label="Generate"><svg class="s20"><use href="#c-struct"/></svg></button><svg class="s8 grey"><use href="#tri"/></svg>
        <button aria-label="Validate"><svg class="s20"><use href="#c-check"/></svg></button><svg class="s8 grey"><use href="#tri"/></svg><i class="tsep"></i>
        <button aria-label="Delete"><svg class="s20"><use href="#c-x"/></svg></button><i class="tsep"></i>
        <button aria-label="Help"><svg class="s20"><use href="#c-help"/></svg></button>
      </div>
      <div class="steps">
        <table>
          <colgroup><col class="w69"><col><col class="w175"><col class="w175"><col class="w88"></colgroup>
          <thead><tr><th>Step</th><th>Action</th><th>Uses</th><th>Results</th><th>State</th></tr></thead>
          <tbody>
            <tr class="sel"><td class="num"><svg class="s16"><use href="#pc"/></svg>1</td><td class="edit">Diagnosing Problem</td><td></td><td></td><td>state3</td></tr>
            <tr><td class="num"><svg class="s16"><use href="#t-actor"/></svg>2</td><td>Solving Problem</td><td></td><td></td><td>state3</td></tr>
            <tr><td class="num"><svg class="s16"><use href="#pc"/></svg>3</td><td>Safe Shutdown</td><td></td><td></td><td>state4</td></tr>
            <tr><td class="num"><svg class="s16"><use href="#newdoc"/></svg></td><td class="ghost">new step...</td><td></td><td></td><td></td></tr>
          </tbody>
        </table>
      </div>
      <div class="etabs"><button class="on">Entry Points</button><button>Context References</button><button>Constraints</button></div>
      <div class="paths">
        <table>
          <colgroup><col class="w88"><col><col class="w175"><col class="w88"></colgroup>
          <thead><tr><th>Step</th><th>Path Name</th><th>Type</th><th>Join</th></tr></thead>
          <tbody>
            <tr><td>0</td><td>Basic Path</td><td>Basic Path</td><td>-</td></tr>
            <tr class="sel"><td>2a</td><td class="edit">Problem XY occured</td><td>Exception</td><td>End</td></tr>
            <tr><td>2b</td><td>Ultrasafe operation</td><td>Alternate</td><td>End</td></tr>
          </tbody>
        </table>
      </div>
      <div class="foot"></div>
    </section>

    <aside class="right">
      <div class="phead"><h2>Properties</h2><div class="pctl"><button aria-label="Options"><svg class="s10"><use href="#tri"/></svg></button><button aria-label="Pin"><svg class="s12"><use href="#pin"/></svg></button><button aria-label="Close"><svg class="s10"><use href="#x"/></svg></button></div></div>
      <div class="ptools">
        <button class="paleb" aria-label="Save"><svg class="s20"><use href="#save"/></svg></button>
        <button aria-label="Menu"><svg class="s16"><use href="#menu"/></svg></button>
        <svg class="s6 grey"><use href="#tri"/></svg>
        <button aria-label="Edit table"><svg class="s20"><use href="#p-table"/></svg></button>
        <button aria-label="Next"><svg class="s18"><use href="#play"/></svg></button>
      </div>
      <div class="ptabs"><button class="on">Scenario</button></div>
      <svg class="notch" viewBox="0 0 48 12" preserveAspectRatio="xMinYMin meet"><path d="M0 11.500h24L33.500 1l9 10.500H48" fill="none" stroke="#aaa"/></svg>
      <div class="plist"><table><tbody><tr><th>Scenario</th><td>Problem XY occured</td></tr><tr><th>Type</th><td>Exception</td></tr></tbody></table></div>
    </aside>
  </main>
</div>
</body>
</html>
```
FILE: styles.css
```css
* { box-sizing: border-box; }
body { margin: 0; font: 13px/18px "Open Sans", "Noto Sans", sans-serif; color: #444; background: #e6e6e6; }
button, input, select { font: inherit; color: inherit; background: none; border: 0; padding: 0; margin: 0; border-radius: 0; outline: 0; }
button { display: flex; align-items: center; white-space: nowrap; }
h1, h2, h3, ul { margin: 0; padding: 0; font-weight: 400; list-style: none; }
svg { display: block; flex: none; }
table { border-collapse: separate; border-spacing: 0; table-layout: fixed; width: 100%; }
th { font-weight: 400; text-align: left; }
th, td { padding: 0; }
.defs { width: 0; height: 0; position: absolute; }
.s6 { width: 6px; height: 6px; }
.s8 { width: 8px; height: 8px; }
.s10 { width: 10px; height: 10px; }
.s12 { width: 12px; height: 12px; }
.s16 { width: 16px; height: 16px; }
.s18 { width: 18px; height: 18px; }
.s20 { width: 20px; height: 20px; }
.grey { color: #777; }

.app { height: 100vh; display: flex; flex-direction: column; overflow: hidden; }

/* title and menu */
.top { position: relative; background: #567ba5; color: #fff; flex: none; }
.waves { position: absolute; right: 0; top: 0; width: 450px; height: 77px; }
.titlebar, .menubar { position: relative; }
.titlebar { display: grid; grid-template-columns: 1fr auto 1fr; align-items: center; height: 43px; }
.quick { display: flex; align-items: center; gap: 11px; padding: 0 0 10px 18px; height: 43px; }
.more { color: #a9a9a9; }
.apptitle { font-size: 13px; margin-right: 40px; padding-bottom: 4px; }
.winctl { display: flex; justify-content: flex-end; gap: 36px; padding: 0 17px 2px 0; }
.menubar { display: flex; height: 34px; align-items: flex-end; }
.appbtn { gap: 6px; width: 80px; height: 34px; padding: 0 0 4px 24px; }
.rtabs { display: flex; }
.rtabs button { height: 34px; padding: 0 18px; border: 1px solid transparent; border-bottom: 0; }
.rtabs button.on { background: #f0f0f0; color: #2f4f73; padding: 0 16px; margin-right: 2px; border-color: #d5d5d5; }
.find { display: flex; gap: 14px; margin-left: 28px; height: 34px; align-items: center; color: #abbccc; }
.find input { width: 130px; }
.find input::placeholder { color: #abbccc; opacity: 1; }
.bulb { width: 14px; height: 18px; }
.usr { margin-left: auto; display: flex; gap: 10px; padding-right: 4px; height: 34px; }
.usr button { gap: 6px; }
.dim { color: #abbccc; }
.hi { margin-bottom: 8px; }

/* ribbon */
.ribbon { display: flex; flex: none; height: 121px; background: #f0f0f0; border: 1px solid #d5d5d5; padding: 2px 0 4px; }
.group { display: flex; flex-direction: column; border-right: 1px solid #d0d0d0; padding: 3px 4px 0 6px; }
.group:first-child { padding: 3px 6px 0 10px; }
.gbody { display: flex; height: 88px; align-items: flex-start; }
.group h2 { font-size: 13px; text-align: center; color: #6e6e6e; line-height: 20px; }
.big { flex-direction: column; min-width: 52px; height: 82px; padding: 3px 3px 0; line-height: 14px; }
.big.on { background: #cfcfcf; }
.big > svg { width: 40px; height: 40px; margin-bottom: 6px; }
.big > svg.cv { width: 8px; height: 6px; margin: 7px 0 0; color: #555; }
.sep { width: 1px; height: 76px; margin: 5px 6px 0 2px; background: #d0d0d0; flex: none; }
.col { padding: 0 10px 0 0; }
.col.wide { padding: 0 6px 0 8px; }
.col button { height: 28px; gap: 4px; }
.knots .s20 { color: #7189b0; }

/* panels */
.work { flex: 1; min-height: 0; display: grid; grid-template-columns: 516px minmax(0, 1fr) 447px; gap: 0 6px; }
.left { display: flex; flex-direction: column; min-height: 0; }
.phead { display: flex; align-items: center; justify-content: space-between; height: 42px; padding: 0 8px 0 4px; background: #e6e6e6; }
.phead h2 { font-size: 22px; line-height: 30px; }
.pctl { display: flex; gap: 12px; color: #777; }
.pctl button { height: 14px; }
.pctl button:first-child svg { margin-top: 4px; }
.browser { display: flex; flex-direction: column; height: 407px; background: #f0f0f0; border-bottom: 6px solid #ccc; }
.ptools { display: flex; align-items: center; height: 30px; gap: 8px; padding: 0 11px 0 6px; background: #f0f0f0; }
.ptools .end { margin-left: auto; }
.tsep { width: 1px; height: 27px; margin: 0 1px; background: #ccc; flex: none; }
.violet { color: #8a89dd; }
.violet .arr { height: 14px; }
.ptabs { display: flex; gap: 16px; padding: 9px 8px 7px; }
.ptabs button.on { color: #3c5f88; }
.notch { width: 100%; height: 12px; background: linear-gradient(#aaa, #aaa) 40px 11px / 100% 1px no-repeat; }
.treebox { display: flex; flex: 1; min-height: 0; margin-top: 11px; background: #fdfdfd; overflow: hidden; }
.tree { flex: 1; min-width: 0; font-size: 14px; }
.tree li { display: flex; align-items: center; height: 24px; white-space: nowrap; }
.tw { width: 10px; height: 12px; margin-right: 11px; }
.ti { width: 20px; height: 18px; margin: 0 9px 4px 0; }
.l1 { padding-left: 67px; }
.l2 { padding-left: 95px; }
.l3 { padding-left: 123px; }
.sbar { width: 21px; display: flex; flex-direction: column; background: #e6e6e6; }
.sbar button { width: 21px; height: 21px; border: 1px solid #bbb; background: #fdfdfd; color: #777; justify-content: center; }
.flip { rotate: 180deg; }
.track { height: 44px; }
.thumb { height: 97px; border: 1px solid #bbb; background: #fdfdfd; }
.track2 { flex: 1; }

.toolbox { flex: 1; min-height: 0; display: flex; flex-direction: column; overflow: hidden; }
.toolbox .phead { border-bottom: 1px solid #fdfdfd; flex: none; height: 42px; }
.tsearch { display: flex; align-items: center; gap: 14px; height: 30px; padding-right: 8px; flex: none; }
.tsearch label { flex: 1; display: flex; align-items: center; height: 30px; padding: 0 5px 0 9px; background: #fdfdfd; border: 1px solid #d5d5d5; margin-right: -6px; }
.tsearch input { flex: 1; min-width: 0; }
.tsearch input::placeholder { color: #666; opacity: 1; }
.tlist { flex: 1; background: #fdfdfd; border: 1px solid #ccc; padding: 3px 2px; }
.tlist h3 { display: flex; align-items: center; gap: 8px; height: 23px; padding-left: 8px; margin-bottom: 7px; background: #cfcfcf; color: #000; font-size: 13px; font-weight: 700; }
.tlist button { height: 29px; gap: 8px; padding-left: 29px; }
.st { width: 20px; height: 14px; margin-bottom: 4px; }

/* centre */
.center { display: flex; flex-direction: column; min-width: 0; min-height: 0; background: #f0f0f0; border: 1px solid #ccc; border-width: 1px 1px 0; }
.crumb { display: flex; align-items: center; height: 33px; padding: 0 11px 0 6px; gap: 23px; background: #e6e6e6; border-bottom: 1px solid #ccc; color: #777; font-size: 12px; flex: none; }
.crumb span { padding-top: 2px; }
.cctl { margin-left: auto; display: flex; gap: 16px; color: #111; }
.cctl .s10:first-child { margin-top: 2px; }
.dtabs { display: flex; height: 36px; background: #e6e6e6; font-size: 22px; line-height: 30px; flex: none; box-shadow: inset 0 -1px #ccc; }
.dtabs button { gap: 4px; flex: none; }
.cut { width: 72px; overflow: hidden; justify-content: flex-end; }
.t1 { padding-left: 16px; }
.t1 + .t1 { padding-left: 13px; }
.dtabs button.on { margin: 1px 0 0 14px; padding: 0 9px 0 4px; background: #fdfdfd; border: 1px solid #aaa; border-bottom: 0; }
.cl { color: #777; margin-left: 18px; }
.dtabs button.last { flex: 1; min-width: 0; padding-left: 7px; gap: 2px; overflow: hidden; }
.nav { display: flex; align-items: center; gap: 8px; padding: 0 7px 4px 0; }
.form { display: flex; gap: 8px; padding: 6px 3px 0 4px; height: 62px; flex: none; }
.form label { display: flex; flex-direction: column; gap: 2px; line-height: 18px; }
.ty { width: 110px; }
.sc { flex: 1; }
.selw { display: grid; align-items: center; background: #fdfdfd; border: 1px solid #ccc; height: 24px; font-size: 12px; }
.selw select { grid-area: 1 / 1; appearance: none; padding: 0 5px; height: 22px; }
.selw svg { grid-area: 1 / 1; justify-self: end; margin-right: 9px; pointer-events: none; }
.ctools { display: flex; align-items: center; gap: 8px; height: 30px; padding-left: 5px; background: #eee; flex: none; }
.ctools .arr { height: 18px; }
.pale { color: #a9a9de; }
.paleb { color: #a3bdd8; }
.lgreen { color: #93b79f; }
.green { color: #38804b; }
.steps { height: 194px; background: #fdfdfd; font-size: 14px; flex: none; }
.w69 { width: 69px; }
.w88 { width: 88px; }
.w175 { width: 175px; }
.center th { height: 34px; padding-left: 7px; background: linear-gradient(#e6e6e6, #aaa) right / 1px 100% no-repeat #e6e6e6; border-bottom: 1px solid #aaa; }
.center th:last-child { background: #e6e6e6; }
.steps td { height: 37px; padding-left: 13px; }
.steps .sel td { height: 36px; padding-left: 12px; }
.steps td.num, .steps .sel td.num { padding: 0; }
.num svg { float: left; margin-right: 22px; }
.sel td { background: #cfcfcf; border-top: 1px dotted #000; border-bottom: 1px dotted #000; }
.sel td + td { border-left: 1px solid #fdfdfd; }
.sel td:last-child { border-right: 1px dotted #000; }
.sel td.edit { background: #fdfdfd; border-left: 1px solid #444; border-right: 1px solid #444; }
.steps td.ghost { color: #c5c5c5; font-style: italic; padding-left: 9px; }
.etabs { display: flex; height: 27px; padding-top: 2px; background: #e6e6e6; box-shadow: inset 0 -1px #aaa; flex: none; }
.etabs button { padding: 0 8px; }
.etabs button.on { background: #fdfdfd; border: 1px solid #aaa; border-width: 1px 1px 0 0; padding: 0 7px; margin-right: 1px; }
.paths { flex: 1; min-height: 0; background: #fdfdfd; padding: 2px 2px 0; border: 1px solid #aaa; border-width: 0 1px 1px 0; font-size: 14px; }
.paths td { height: 30px; padding-left: 5px; }
.paths .sel td { padding-left: 4px; }
.paths .sel td:first-child { border-left: 1px dotted #000; }
.foot { height: 13px; background: #e6e6e6; border-top: 9px solid #ccc; flex: none; }

/* right */
.right { display: flex; flex-direction: column; background: #f0f0f0; min-height: 0; }
.right .ptools { gap: 10px; }
.right .ptabs { padding-top: 5px; padding-bottom: 1px; }
.right .notch { background-position: 46px 11px; }
.plist { flex: 1; margin-top: 12px; background: #fdfdfd; border: 1px solid #d0d0d0; }
.plist th { width: 181px; height: 26px; padding-left: 5px; border-left: 24px solid #eee; }
```
